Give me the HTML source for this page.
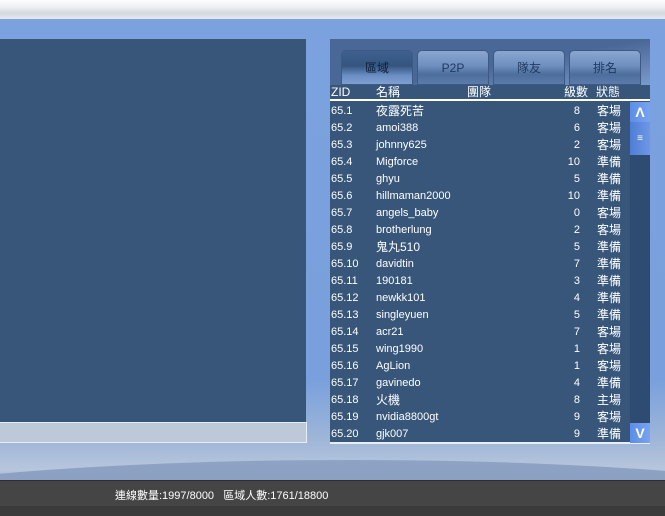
<!DOCTYPE html>
<html style="overflow:hidden;width:665px;height:516px"><head><meta charset="utf-8"><style>
*{margin:0;padding:0;box-sizing:border-box}
body{width:665px;height:516px;overflow:hidden;position:relative;font-family:"Liberation Sans","Noto Sans CJK TC",sans-serif;font-size:11px;color:#fff;
background:linear-gradient(#7ba2de 0px,#79a0dc 380px,#9fb6d8 440px,#b7c6dc 470px,#9fb2cf 480px)}
.top{position:absolute;left:0;top:0;width:665px;height:19px;background:linear-gradient(#fdfdfe,#eceef2 40%,#d3d7de 70%,#e6ebf4)}
.clip{position:absolute;left:0;top:440px;width:665px;height:40px;overflow:hidden}
.arc{position:absolute;left:-200px;top:20px;width:1100px;height:120px;border-radius:50%;background:linear-gradient(#8ea3c4,#7d93b8);}
.lp{position:absolute;left:0;top:39px;width:306px;height:384px;background:#37567a}
.inp{position:absolute;left:0;top:422px;width:307px;height:21px;background:#bdc8d9;border:1px solid #e8eef6;border-left:none}
.rp{position:absolute;left:330px;top:39px;width:320px;height:405px;background:#37567a;border-bottom:2px solid #e8eef6}
.hdr{position:absolute;left:0;top:0;width:320px;height:46px;background:linear-gradient(170deg,#4a6896 0%,#4a6896 55%,#7a9acc 100%)}
.tab{position:absolute;top:11px;width:72px;height:35px;border-radius:5px 5px 0 0;border:1px solid #3e5a84;
background:linear-gradient(#8aa6d0,#6f8fbf 45%,#4d6d9c 70%,#5b7bab);color:#213a62;font-size:12px;text-align:center;line-height:34px}
.tab.on{background:linear-gradient(#3f6090,#35557f 45%,#6b8fc4 75%,#7f9fd0);color:#0c1e3a}
.ch{position:absolute;left:0;top:46px;width:320px;height:16px;background:#37567a;border-bottom:2px solid #fff;font-size:12px;line-height:14px}
.row{position:absolute;left:0;width:300px;height:17px;line-height:18px;font-size:11px}
.c{position:absolute;white-space:nowrap}
.sb{position:absolute;left:300px;top:63px;width:20px;height:341px;background:#2e4b72}
.up,.dn{position:absolute;left:0;width:20px;height:20px;background:linear-gradient(90deg,#5c8ee8,#77a3f0);font-weight:bold;font-size:14px;text-align:center;line-height:20px}
.th{position:absolute;left:0;top:20px;width:20px;height:33px;background:linear-gradient(90deg,#4f7ed6,#6e98e6);text-align:center;line-height:33px;font-size:10px}
.bar{position:absolute;left:0;top:480px;width:665px;height:26px;background:#454545;border-top:1px solid #2e2e2e}
.bot{position:absolute;left:0;top:506px;width:665px;height:10px;background:#3b3b3b}
</style></head><body>
<div class="top"></div>
<div class="clip"><div class="arc"></div></div>
<div class="lp"></div>
<div class="inp"></div>
<div class="rp">
<div class="hdr">
<div class="tab on" style="left:11px">區域</div>
<div class="tab" style="left:87px">P2P</div>
<div class="tab" style="left:163px">隊友</div>
<div class="tab" style="left:239px">排名</div>
</div>
<div class="ch"><span class="c" style="left:1px">ZID</span><span class="c" style="left:46px">名稱</span><span class="c" style="left:137px">團隊</span><span class="c" style="left:234px">級數</span><span class="c" style="left:266px">狀態</span></div>
<div id="rows"></div>
<div class="sb"><div class="up">Λ</div><div class="th">≡</div><div class="dn" style="top:321px">V</div></div>
</div>
<div class="bar"><span style="position:absolute;left:115px;top:6px;font-size:11px;color:#fff">連線數量:1997/8000&nbsp;&nbsp;&nbsp;區域人數:1761/18800</span></div>
<div class="bot"></div>
<script>
var d=[["夜露死苦",8,"客場"],["amoi388",6,"客場"],["johnny625",2,"客場"],["Migforce",10,"準備"],["ghyu",5,"準備"],["hillmaman2000",10,"準備"],["angels_baby",0,"客場"],["brotherlung",2,"客場"],["鬼丸510",5,"準備"],["davidtin",7,"準備"],["190181",3,"準備"],["newkk101",4,"準備"],["singleyuen",5,"準備"],["acr21",7,"客場"],["wing1990",1,"客場"],["AgLion",1,"客場"],["gavinedo",4,"準備"],["火機",8,"主場"],["nvidia8800gt",9,"客場"],["gjk007",9,"準備"]];
var h="";d.forEach(function(r,i){var cjk=/[^\x00-\x7f]/.test(r[0]);h+='<div class="row" style="top:'+(63+i*17)+'px"><span class="c" style="left:1px">65.'+(i+1)+'</span><span class="c" style="left:46px;'+(cjk?'font-size:12px':'')+'">'+r[0]+'</span><span class="c" style="right:50px">'+r[1]+'</span><span class="c" style="left:267px;font-size:12px">'+r[2]+'</span></div>'});
document.getElementById("rows").innerHTML=h;
</script>
</body></html>
